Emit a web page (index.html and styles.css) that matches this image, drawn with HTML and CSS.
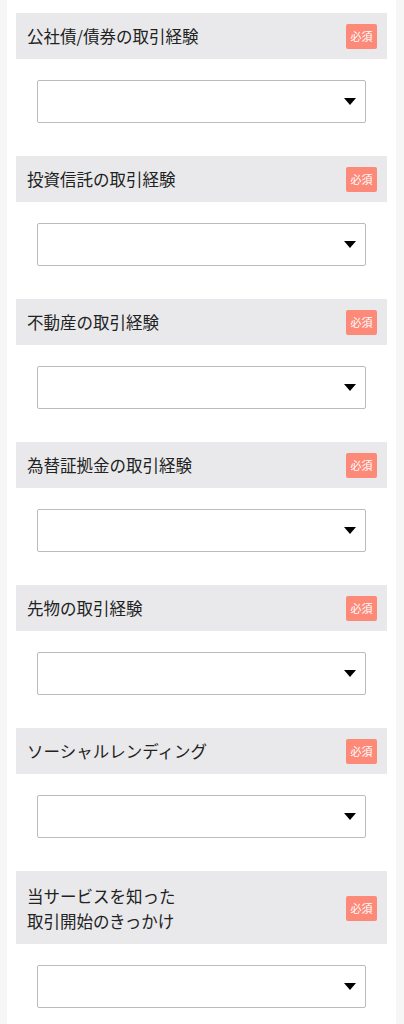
FILE: index.html
```html
<!DOCTYPE html>
<html>
<head>
    <title>取引経験</title>
    <link rel="stylesheet" href="styles.css">
</head>
<body>
    <div class="container">
        <div class="field">
            <div class="field-head"><span class="field-label">公社債/債券の取引経験</span><span class="badge">必須</span></div>
            <div class="select-wrap"><select class="select"></select><span class="arrow"></span></div>
        </div>
        <div class="field">
            <div class="field-head"><span class="field-label">投資信託の取引経験</span><span class="badge">必須</span></div>
            <div class="select-wrap"><select class="select"></select><span class="arrow"></span></div>
        </div>
        <div class="field">
            <div class="field-head"><span class="field-label">不動産の取引経験</span><span class="badge">必須</span></div>
            <div class="select-wrap"><select class="select"></select><span class="arrow"></span></div>
        </div>
        <div class="field">
            <div class="field-head"><span class="field-label">為替証拠金の取引経験</span><span class="badge">必須</span></div>
            <div class="select-wrap"><select class="select"></select><span class="arrow"></span></div>
        </div>
        <div class="field">
            <div class="field-head"><span class="field-label">先物の取引経験</span><span class="badge">必須</span></div>
            <div class="select-wrap"><select class="select"></select><span class="arrow"></span></div>
        </div>
        <div class="field">
            <div class="field-head"><span class="field-label">ソーシャルレンディング</span><span class="badge">必須</span></div>
            <div class="select-wrap"><select class="select"></select><span class="arrow"></span></div>
        </div>
        <div class="field">
            <div class="field-head field-head-tall"><span class="field-label">当サービスを知った<br>取引開始のきっかけ</span><span class="badge">必須</span></div>
            <div class="select-wrap"><select class="select"></select><span class="arrow"></span></div>
        </div>
    </div>
</body>
</html>
```

FILE: styles.css
```css
body {
    margin: 0;
    background-color: #f6f6f6;
    font-family: "Noto Sans CJK JP", "Noto Sans", sans-serif;
}
.container {
    background-color: #fff;
    margin: 0 8px 0 7px;
    padding: 13px 9px;
}
.field {
    margin-bottom: 33px;
}
.field-head {
    display: flex;
    align-items: center;
    justify-content: space-between;
    height: 46px;
    box-sizing: border-box;
    padding: 0 10px 0 11px;
    background-color: #e9e9eb;
}
.field-head-tall {
    height: 73px;
    padding-top: 2px;
}
.field-label {
    font-size: 16.5px;
    line-height: 25px;
    color: #222;
}
.badge {
    flex-shrink: 0;
    width: 31px;
    height: 25px;
    line-height: 25px;
    text-align: center;
    font-size: 11px;
    color: #fff;
    background-color: #fd8a79;
    border-radius: 2px;
}
.select-wrap {
    position: relative;
    margin: 21px 21px 0;
}
.select {
    display: block;
    width: 100%;
    height: 43px;
    box-sizing: border-box;
    border: 1px solid #bbb;
    border-radius: 2px;
    background-color: #fff;
    appearance: none;
    -webkit-appearance: none;
}
.arrow {
    position: absolute;
    right: 10px;
    top: 18px;
    width: 0;
    height: 0;
    border-left: 6px solid transparent;
    border-right: 6px solid transparent;
    border-top: 7px solid #000;
    pointer-events: none;
}
```
